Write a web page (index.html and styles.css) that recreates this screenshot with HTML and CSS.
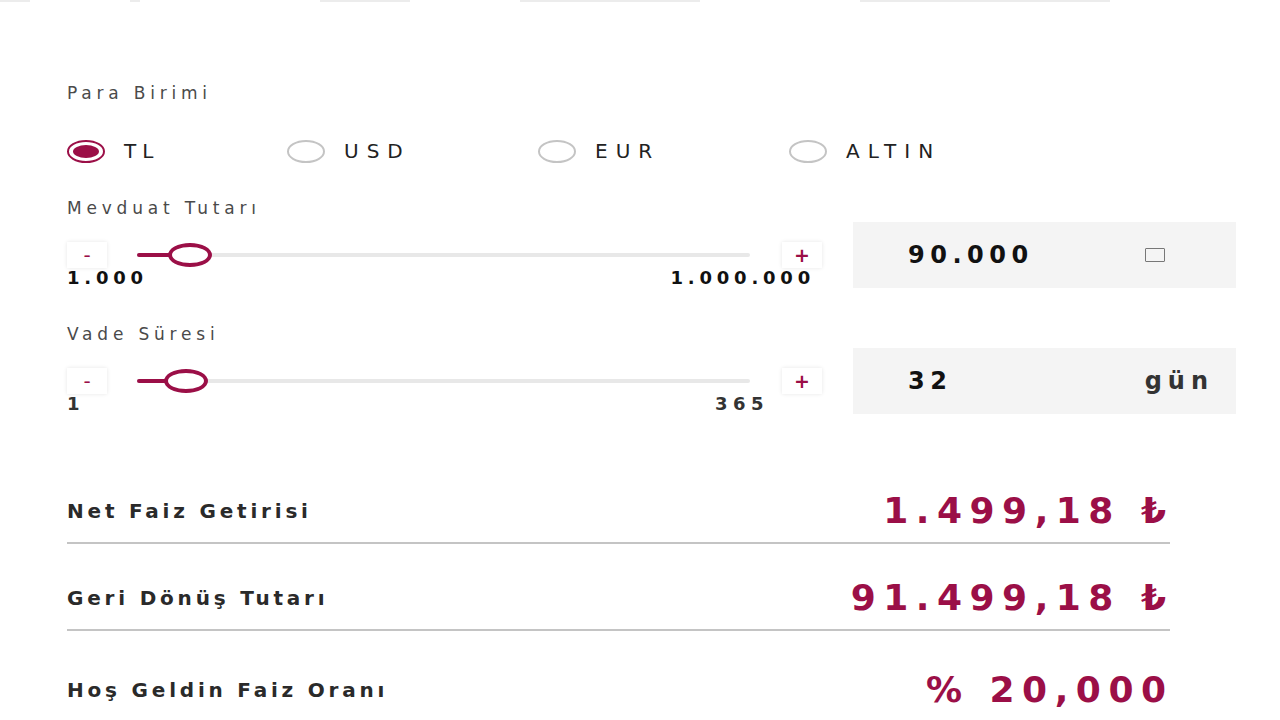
FILE: index.html
```html
<!DOCTYPE html>
<html lang="tr">
<head>
    <meta charset="UTF-8">
    <meta name="viewport" content="width=device-width, initial-scale=1.0">
    <title>Mevduat Hesaplama</title>
    <link rel="stylesheet" href="styles.css">
</head>
<body>

    <!-- Üstteki sekme çizgisi (kesik) -->
    <div class="top-strip">
        <span class="seg s1"></span>
        <span class="seg s2"></span>
        <span class="seg s3"></span>
        <span class="seg s4"></span>
        <span class="seg s5"></span>
    </div>

    <div class="calc">

        <!-- Para birimi -->
        <div class="field-label">Para Birimi</div>
        <div class="radio-row">
            <label class="radio first checked"><span class="dot"></span>TL</label>
            <label class="radio"><span class="dot"></span>USD</label>
            <label class="radio"><span class="dot"></span>EUR</label>
            <label class="radio"><span class="dot"></span>ALTIN</label>
        </div>

        <!-- Mevduat tutarı -->
        <div class="field-label label-gap">Mevduat Tutarı</div>
        <div class="range-block">
            <div class="range-left">
                <div class="slider-row">
                    <button class="step minus">-</button>
                    <div class="track">
                        <div class="fill" style="width: 34px"></div>
                        <div class="thumb" style="left: 31px"></div>
                    </div>
                    <button class="step">+</button>
                </div>
                <div class="limits">
                    <span>1.000</span>
                    <span>1.000.000</span>
                </div>
            </div>
            <div class="value-box">
                <span class="value">90.000</span>
                <span class="tofu"></span>
            </div>
        </div>

        <!-- Vade süresi -->
        <div class="field-label label-gap2">Vade Süresi</div>
        <div class="range-block">
            <div class="range-left">
                <div class="slider-row">
                    <button class="step minus">-</button>
                    <div class="track">
                        <div class="fill" style="width: 30px"></div>
                        <div class="thumb" style="left: 27px"></div>
                    </div>
                    <button class="step">+</button>
                </div>
                <div class="limits short">
                    <span>1</span>
                    <span>365</span>
                </div>
            </div>
            <div class="value-box">
                <span class="value">32</span>
                <span class="unit">gün</span>
            </div>
        </div>

        <!-- Sonuçlar -->
        <div class="results">
            <div class="result-row">
                <span class="result-label">Net Faiz Getirisi</span>
                <span class="result-value">1.499,18 ₺</span>
            </div>
            <div class="result-row">
                <span class="result-label">Geri Dönüş Tutarı</span>
                <span class="result-value">91.499,18 ₺</span>
            </div>
            <div class="result-row last">
                <span class="result-label">Hoş Geldin Faiz Oranı</span>
                <span class="result-value">% 20,000</span>
            </div>
        </div>

    </div>

</body>
</html>
```

FILE: styles.css
```css
body {
    font-family: 'DejaVu Sans', 'Open Sans', sans-serif;
    background-color: #fff;
    margin: 0;
    padding: 0;
    color: #222;
    overflow: hidden;
}
.top-strip {
    display: flex;
    height: 2px;
}
.seg {
    height: 2px;
    background-color: #ececec;
}
.s1 { width: 30px; margin-right: 100px; }
.s2 { width: 10px; margin-right: 180px; }
.s3 { width: 90px; margin-right: 110px; }
.s4 { width: 180px; margin-right: 160px; }
.s5 { width: 250px; }
.calc {
    padding: 80px 44px 0 67px;
}
.field-label {
    font-size: 17px;
    line-height: 22px;
    color: #4a4a4a;
    letter-spacing: 4.8px;
}
.label-gap {
    margin-top: 31px;
}
.label-gap2 {
    margin-top: 35px;
}
.radio-row {
    display: flex;
    margin-top: 32px;
    height: 30px;
    align-items: center;
}
.radio {
    display: flex;
    align-items: center;
    width: 251px;
    font-size: 20px;
    letter-spacing: 8px;
    color: #222;
}
.radio.first {
    width: 220px;
    letter-spacing: 6px;
}
.dot {
    width: 34px;
    height: 19px;
    border: 2px solid #c4c4c4;
    border-radius: 50%;
    margin-right: 19px;
    position: relative;
}
.radio.checked .dot {
    border-color: #9b0f47;
}
.radio.checked .dot::after {
    content: "";
    position: absolute;
    left: 4px;
    top: 3px;
    right: 4px;
    bottom: 3px;
    border-radius: 50%;
    background-color: #9b0f47;
}
.range-block {
    display: flex;
    margin-top: 3px;
    gap: 31px;
}
.range-left {
    width: 755px;
    flex-shrink: 0;
    padding-top: 20px;
}
.slider-row {
    display: flex;
    align-items: center;
    height: 26px;
}
.step {
    width: 40px;
    height: 26px;
    border: none;
    background-color: #fff;
    box-shadow: 0 0 4px rgba(0, 0, 0, 0.1);
    color: #9b0f47;
    font-family: 'DejaVu Sans', sans-serif;
    font-size: 19px;
    font-weight: bold;
    padding: 0;
    line-height: 26px;
}
.step.minus {
    font-weight: normal;
    font-size: 20px;
}
.track {
    flex: 1;
    height: 4px;
    margin: 0 32px 0 30px;
    background-color: #e8e8e8;
    border-radius: 2px;
    position: relative;
}
.fill {
    height: 4px;
    background-color: #9b0f47;
    border-radius: 2px;
}
.thumb {
    position: absolute;
    top: -10px;
    width: 36px;
    height: 16px;
    border: 4px solid #9b0f47;
    background-color: #fff;
    border-radius: 50%;
}
.limits {
    display: flex;
    justify-content: space-between;
    font-size: 18px;
    font-weight: bold;
    line-height: 20px;
    letter-spacing: 4.8px;
    padding-right: 7px;
    color: #111;
}
.limits.short {
    padding-right: 53px;
    letter-spacing: 5.5px;
    color: #333;
}
.value-box {
    box-sizing: border-box;
    width: 383px;
    height: 66px;
    background-color: #f4f4f4;
    display: flex;
    align-items: center;
    justify-content: space-between;
    padding: 0 22px 0 55px;
}
.value {
    font-size: 24px;
    font-weight: bold;
    letter-spacing: 5.5px;
    color: #111;
}
.unit {
    font-size: 24px;
    font-weight: bold;
    letter-spacing: 6px;
    color: #333;
}
.tofu {
    width: 18px;
    height: 12px;
    border: 1.5px solid #777;
    border-radius: 1px;
    margin-right: 49px;
}
.results {
    width: 1103px;
    margin-top: 41px;
}
.result-row {
    display: flex;
    justify-content: space-between;
    align-items: center;
    padding: 34px 0 11px 0;
    border-bottom: 2px solid #c4c4c4;
}
.result-row:first-child {
    padding-top: 36px;
}
.result-row.last {
    border-bottom: none;
    padding-top: 39px;
}
.result-label {
    font-size: 20px;
    font-weight: bold;
    letter-spacing: 3.8px;
    color: #2a2a2a;
}
.result-value {
    font-size: 36px;
    line-height: 40px;
    font-weight: bold;
    letter-spacing: 7.5px;
    margin-right: -3.5px;
    color: #9b0f47;
}
```
